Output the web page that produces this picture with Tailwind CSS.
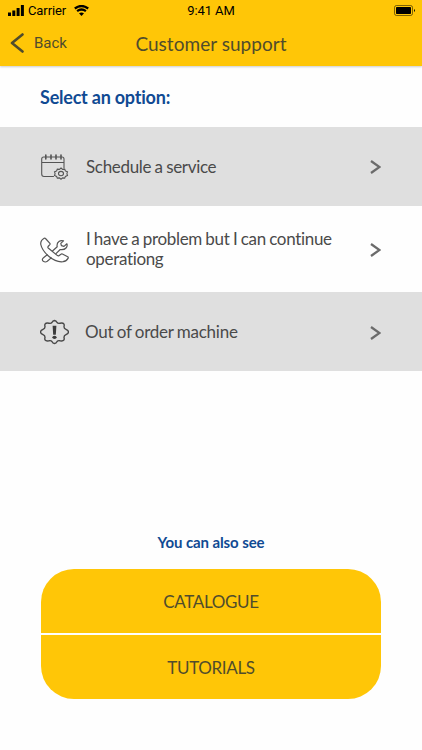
<!DOCTYPE html>
<html lang="en">
<head>
<meta charset="utf-8">
<title>Customer support</title>
<script src="https://cdn.jsdelivr.net/npm/@tailwindcss/browser@4"></script>
</head>
<body class="w-[422px] h-[750px] overflow-hidden bg-[#fefefe] font-[Lato,sans-serif] text-[#4a4a4a] flex flex-col">
<header class="h-[66px] shrink-0 bg-[#ffc607] shadow-[0_1px_2px_#0003]">
  <div class="h-[21px] grid grid-cols-3 items-center pl-2 pr-[6px] font-[Roboto,sans-serif] text-[13px] text-black">
    <div class="flex items-center">
      <svg class="w-4 h-[11px]" viewBox="0 0 16 11"><path d="M0 7.5h3V11H0zM4.3 5.5h3V11h-3zM8.6 3h3v8h-3zM12.9 0h3v11h-3z"/></svg>
      <span class="ml-1 tracking-[-0.1px]">Carrier</span>
      <svg class="ml-2 w-[15px] h-[11px]" viewBox="0 0 15 11"><path d="M7.5 11 5 8.3Q7.5 6.5 10 8.3z"/><path d="M.8 3.5q6.700-5 13.400 0M3.100 6.100q4.400-3.200 8.800 0" fill="none" stroke="#000" stroke-width="2.300"/></svg>
    </div>
    <span class="text-center tracking-[-0.1px] pr-[2px]">9:41 AM</span>
    <svg class="w-[22px] h-[11px] justify-self-end" viewBox="0 0 22 11"><rect x=".5" y=".5" width="18" height="10" rx="2" fill="none" stroke="#000" stroke-opacity=".5"/><rect x="2" y="2" width="15" height="7" rx=".7"/><path d="M20 4q2 1.500 0 3z"/></svg>
  </div>
  <div class="h-[45px] grid grid-cols-[125px_1fr_125px]">
    <div class="flex items-start pt-3 pl-[10px]">
      <svg class="w-[14px] h-5" viewBox="0 0 14 20"><path d="M12.500 1.500 2 10l10.500 8.500" fill="none" stroke="#504c2c" stroke-width="2.600" stroke-linecap="round" stroke-linejoin="round"/></svg>
      <span class="ml-[10px] leading-5 font-[Roboto,sans-serif] text-[15px] text-[#504c2c]">Back</span>
    </div>
    <h1 class="text-center text-[19px] leading-6 pt-[11px] text-[#504c2c] whitespace-nowrap tracking-[0.04px]">Customer support</h1>
  </div>
</header>
<main class="flex-1 flex flex-col min-h-0">
  <h2 class="h-[61px] pl-10 pt-[19px] text-[18px] leading-6 font-bold text-[#104a93] tracking-[-0.22px]">Select an option:</h2>
  <div class="h-[79px] flex items-center bg-[#dfdfdf] pl-10 pr-[41px]">
    <svg class="w-[29px] h-[26px] shrink-0" viewBox="0 0 29 26" fill="none" stroke="#555" stroke-width="1.100" stroke-linecap="round">
      <path d="M13.500 22.500H4Q1.700 22.500 1.700 20V5Q1.700 3 3.700 3H22Q24 3 24 5v9M1.700 8.500H24"/>
      <path d="M5.800 1v4M11 1v4M16 1v4M21 1v4" stroke-width="1.600"/>
      <path d="m21 14 1.600 1.400 2.100-.2.700 1.700 2.100 1-.600 1.800.600 1.700-2.100 1-.700 1.700-2.100-.2L21 25.200l-1.600-1.300-2.100.2-.700-1.700-2.100-1 .600-1.700-.600-1.800 2.100-1 .700-1.700 2.100.2z"/>
      <ellipse cx="21" cy="19.600" rx="2.500" ry="2.200"/>
    </svg>
    <span class="ml-[17px] text-[17px] flex-1 tracking-[-0.32px] [word-spacing:-0.6px]">Schedule a service</span>
    <svg class="w-[11px] h-[14px]" viewBox="0 0 11 14"><path d="m1 1 8.500 6L1 13" fill="none" stroke="#6b6b6b" stroke-width="2.300"/></svg>
  </div>
  <div class="h-[86px] flex items-center pl-10 pr-[41px]">
    <svg class="w-[29px] h-[26px] shrink-0 mt-[2px]" viewBox="0 0 29 26" fill="none" stroke="#555" stroke-width="1.200" stroke-linejoin="round" stroke-linecap="round">
      <path d="M4.200 1.200Q.2 3.500.8 7.500 2 13.500 9 19.500t14 5.200q3.500-.5 5.200-3.600.3-.8-.5-1.300L22.400 17q-.8-.4-1.500.2l-2 1.500q-.7.400-1.400-.1L8.200 11q-.7-.700-.1-1.500L9.800 7.600q.5-.6.100-1.300L5.500 1.500Q5 .9 4.200 1.200Z"/>
      <path d="m12.500 14 4.700-4.200q-.7-3.600 1.700-5.300 2-1.500 4.600-.6l-2.700 2.500.6 2.300 2.600.7 2.900-2.600q.8 2.400-.9 4.200-2 2.200-5.800 1.500L16 16.600M7.200 17.800l-3.400 2.700q-2.600 2-.5 3.800 2 1.400 4 0l3.900-3.400"/>
    </svg>
    <span class="ml-[17px] text-[17px] leading-[20px] flex-1 whitespace-nowrap tracking-[-0.33px] [word-spacing:-0.6px]">I have a problem but I can continue<br>operationg</span>
    <svg class="w-[11px] h-[14px] mt-[2px]" viewBox="0 0 11 14"><path d="m1 1 8.500 6L1 13" fill="none" stroke="#6b6b6b" stroke-width="2.300"/></svg>
  </div>
  <div class="h-[79px] flex items-center bg-[#dfdfdf] pl-10 pr-[41px]">
    <svg class="w-[29px] h-[26px] shrink-0" viewBox="-14.500 -13 29 26" fill="none" stroke="#484848" stroke-width="1.400" stroke-linejoin="round">
      <path d="M0-11.500Q1.700-11.300 2.600-9.500 3.500-8.300 5.500-8.800 8.500-9.300 9.300-8.200 10-7.200 9.500-5.500 9.400-3.500 11.500-2.600 14-1.500 14 0 14 1.500 11.500 2.600 9.400 3.500 9.500 5.500 10 7.200 9.300 8.200 8.500 9.300 5.500 8.800 3.500 8.300 2.600 9.500 1.700 11.300 0 11.500-1.700 11.300-2.600 9.500-3.500 8.300-5.500 8.800-8.500 9.300-9.300 8.200-10 7.200-9.500 5.500-9.400 3.500-11.500 2.600-14 1.500-14 0-14-1.500-11.500-2.600-9.400-3.500-9.500-5.500-10-7.200-9.300-8.200-8.500-9.300-5.500-8.800-3.500-8.300-2.600-9.500-1.700-11.300 0-11.500Z"/>
      <path d="M-1.900-6.200h3.800L1.300 2.700h-2.600z" fill="#3c3c3c" stroke="none"/><ellipse cy="5.300" rx="2.100" ry="1.600" fill="#3c3c3c" stroke="none"/>
    </svg>
    <span class="ml-[16px] text-[17px] flex-1 tracking-[-0.26px] [word-spacing:-0.6px]">Out of order machine</span>
    <svg class="w-[11px] h-[14px] mt-[2px]" viewBox="0 0 11 14"><path d="m1 1 8.500 6L1 13" fill="none" stroke="#6b6b6b" stroke-width="2.300"/></svg>
  </div>
  <section class="mt-[161px] px-[41px] text-center">
    <h3 class="text-[15px] leading-5 font-bold text-[#104a93] tracking-[-0.1px]">You can also see</h3>
    <div class="mt-[17px] flex flex-col gap-[2px] text-[17px] text-[#504c2c] tracking-[-0.35px]">
      <button class="h-[64px] rounded-t-[33px] bg-[#ffc607] pt-[2px]">CATALOGUE</button>
      <button class="h-[64px] rounded-b-[33px] bg-[#ffc607] pt-[2px]">TUTORIALS</button>
    </div>
  </section>
</main>
</body>
</html>
